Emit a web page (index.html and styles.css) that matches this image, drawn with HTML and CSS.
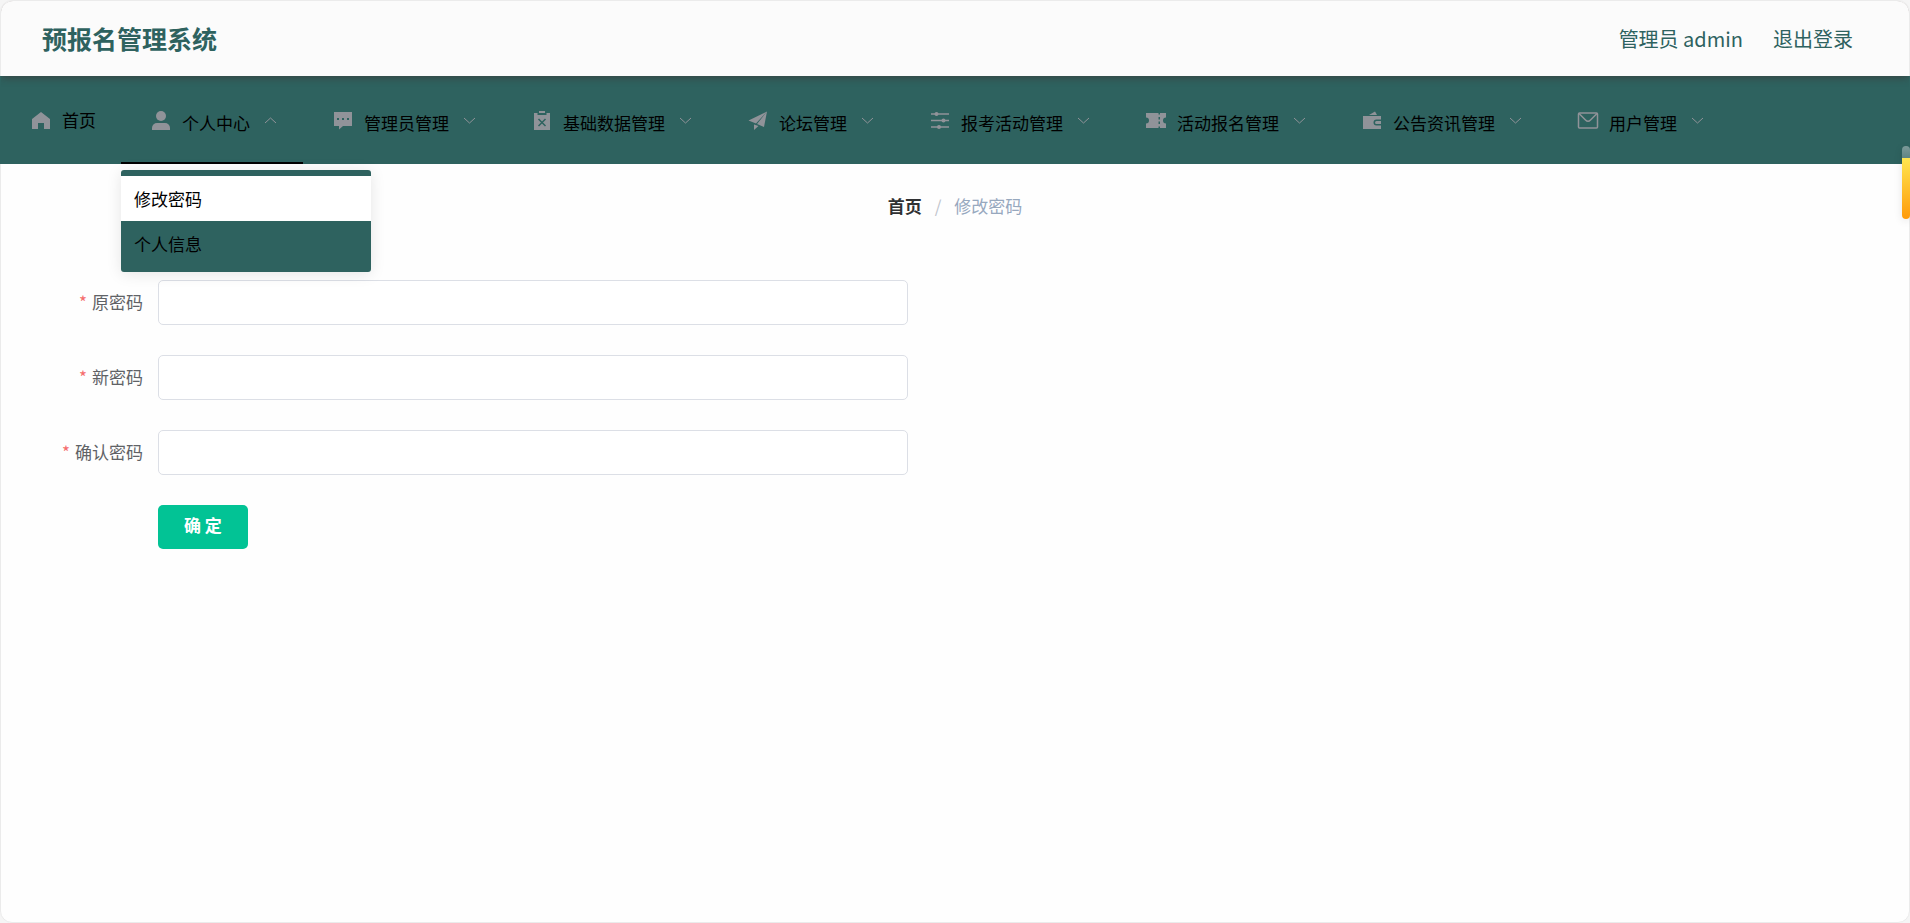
FILE: index.html
```html
<!DOCTYPE html>
<html lang="zh-CN">
<head>
    <meta charset="UTF-8">
    <meta name="viewport" content="width=device-width, initial-scale=1.0">
    <title>预报名管理系统</title>
    <link rel="stylesheet" href="styles.css">
</head>
<body>
    <div class="app">
        <header class="header">
            <h1 class="title">预报名管理系统</h1>
            <div class="user">
                <span>管理员 admin</span>
                <a href="#">退出登录</a>
            </div>
        </header>

        <nav class="navbar">
            <ul class="menu">
                <li class="menu-item">
                    <a class="menu-link" href="#">
                        <svg class="icon" viewBox="0 0 22 22"><path d="M11 2 2 9v10h6v-6h6v6h6V9z"/></svg>
                        <span>首页</span>
                    </a>
                </li>
                <li class="menu-item submenu active">
                    <a class="menu-link" href="#">
                        <svg class="icon" viewBox="0 0 22 22"><circle cx="11" cy="6" r="5"/><path d="M2 20v-2a5 5 0 0 1 5-5h8a5 5 0 0 1 5 5v2z"/></svg>
                        <span class="menu-text">个人中心</span>
                        <svg class="arrow" viewBox="0 0 15 15"><path d="m2 10 5.500-5 5.500 5"/></svg>
                    </a>
                    <ul class="dropdown">
                        <li><a class="dropdown-link current" href="#">修改密码</a></li>
                        <li><a class="dropdown-link" href="#">个人信息</a></li>
                    </ul>
                </li>
                <li class="menu-item submenu">
                    <a class="menu-link" href="#">
                        <svg class="icon" viewBox="0 0 22 22"><path fill-rule="evenodd" d="M2 2h18v14h-9l-4 3.500V16H2zM5 8v2h2V8zm5 0v2h2V8zm5 0v2h2V8z"/></svg>
                        <span class="menu-text">管理员管理</span>
                        <svg class="arrow" viewBox="0 0 15 15"><path d="m2 5 5.500 5 5.500-5"/></svg>
                    </a>
                </li>
                <li class="menu-item submenu">
                    <a class="menu-link" href="#">
                        <svg class="icon" viewBox="0 0 22 22"><path d="M8 1h6v2H8z"/><path d="M3 3h3.500v2h9V3H19v17H3z"/><path class="icon-mark" d="m7.500 9 7 7m0-7-7 7"/></svg>
                        <span class="menu-text">基础数据管理</span>
                        <svg class="arrow" viewBox="0 0 15 15"><path d="m2 5 5.500 5 5.500-5"/></svg>
                    </a>
                </li>
                <li class="menu-item submenu">
                    <a class="menu-link" href="#">
                        <svg class="icon" viewBox="0 0 22 22"><path d="m1.500 10.500 18.500-9-11 12zM20 1.500l-3 15.500-7-3zM7 14.500l4.500 1.500L7 20z"/></svg>
                        <span class="menu-text">论坛管理</span>
                        <svg class="arrow" viewBox="0 0 15 15"><path d="m2 5 5.500 5 5.500-5"/></svg>
                    </a>
                </li>
                <li class="menu-item submenu">
                    <a class="menu-link" href="#">
                        <svg class="icon" viewBox="0 0 22 22"><path d="M2 3.250h18v1.500H2zM2 9.750h18v1.500H2zM2 16.250h18v1.500H2z"/><circle cx="7.500" cy="4" r="2"/><circle cx="14.500" cy="10.500" r="2"/><circle cx="10" cy="17" r="2"/></svg>
                        <span class="menu-text">报考活动管理</span>
                        <svg class="arrow" viewBox="0 0 15 15"><path d="m2 5 5.500 5 5.500-5"/></svg>
                    </a>
                </li>
                <li class="menu-item submenu">
                    <a class="menu-link" href="#">
                        <svg class="icon" viewBox="0 0 22 22"><path fill-rule="evenodd" d="M1 3h12.500v1.500h1.500V3h6v4.500a3 3 0 0 0 0 6V18h-6v-1.500h-1.500V18H1v-4.500a3 3 0 0 0 0-6zm12.500 4v2.500h1.500V7zm0 4.500V14h1.500v-2.500z"/></svg>
                        <span class="menu-text">活动报名管理</span>
                        <svg class="arrow" viewBox="0 0 15 15"><path d="m2 5 5.500 5 5.500-5"/></svg>
                    </a>
                </li>
                <li class="menu-item submenu">
                    <a class="menu-link" href="#">
                        <svg class="icon" viewBox="0 0 22 22"><path d="m8 5 6-3.500 2 3.500z"/><path d="M2 6h18v3.500h-4.500a3 3 0 0 0 0 6H20V19H2z"/><path d="M15.500 11H20v3h-4.500a1.500 1.500 0 0 1 0-3z"/></svg>
                        <span class="menu-text">公告资讯管理</span>
                        <svg class="arrow" viewBox="0 0 15 15"><path d="m2 5 5.500 5 5.500-5"/></svg>
                    </a>
                </li>
                <li class="menu-item submenu">
                    <a class="menu-link" href="#">
                        <svg class="icon icon-line" viewBox="0 0 22 22"><rect x="1.500" y="3" width="19" height="15" rx="1"/><path d="m2 3.500 6.500 6.500q2.500 2.500 5 0L20 3.500"/></svg>
                        <span class="menu-text">用户管理</span>
                        <svg class="arrow" viewBox="0 0 15 15"><path d="m2 5 5.500 5 5.500-5"/></svg>
                    </a>
                </li>
            </ul>
        </nav>

        <main class="main">
            <div class="breadcrumb">
                <a href="#">首页</a>
                <span class="separator">/</span>
                <span>修改密码</span>
            </div>

            <form class="password-form">
                <div class="form-item">
                    <label for="old-password">原密码</label>
                    <input type="password" id="old-password">
                </div>
                <div class="form-item">
                    <label for="new-password">新密码</label>
                    <input type="password" id="new-password">
                </div>
                <div class="form-item">
                    <label for="confirm-password">确认密码</label>
                    <input type="password" id="confirm-password">
                </div>
                <button class="submit-btn" type="submit">确 定</button>
            </form>
        </main>
    </div>
    <div class="side-handle"></div>
</body>
</html>
```
FILE: styles.css
```css
* {
    box-sizing: border-box;
}

body {
    margin: 0;
    background: #f5f5f5;
    color: #303133;
    font-family: "Noto Sans CJK SC", sans-serif;
    font-size: 17px;
    line-height: 24px;
}

a {
    color: inherit;
    text-decoration: none;
}

ul {
    list-style: none;
    margin: 0;
    padding: 0;
}

.app {
    min-height: 100vh;
    background: #fefefe;
    border: 1px solid #ebebeb;
    border-radius: 12px;
}

/* header */
.header {
    position: relative;
    z-index: 1;
    display: flex;
    justify-content: space-between;
    align-items: center;
    height: 75px;
    padding: 0 56px 0 41px;
    background: #fbfbfb;
    border-radius: 12px 12px 0 0;
    box-shadow: 0 1px 8px rgba(64, 40, 40, 0.6);
    clip-path: inset(0 0 -12px 0 round 12px 12px 0 0);
    color: #2e625f;
}

.title {
    margin: 0 0 2px;
    font-size: 25px;
}

.user {
    display: flex;
    gap: 30px;
    font-size: 20px;
}

/* menu */
.navbar {
    margin: 0 -1px;
    padding: 0 1px;
    background: #2e625f;
    color: #000;
}

.menu {
    display: flex;
}

.menu-item {
    position: relative;
}

.menu-link {
    display: flex;
    align-items: center;
    height: 88px;
    padding: 2px 25px 0;
    border-bottom: 2px solid transparent;
    white-space: nowrap;
}

.active .menu-link {
    border-bottom-color: #000;
}

.menu-text {
    padding-top: 5px;
}

.icon {
    width: 22px;
    height: 22px;
    margin: 2px 10px 0 4px;
    fill: #909399;
}

.icon-line {
    fill: none;
    stroke: #909399;
    stroke-width: 1.500;
}

.icon-mark {
    fill: none;
    stroke: #2e625f;
    stroke-width: 1.500;
}

.arrow {
    width: 15px;
    height: 15px;
    margin-left: 13px;
    fill: none;
    stroke: #909399;
}

.dropdown {
    position: absolute;
    top: 94px;
    left: 0;
    z-index: 2;
    width: 250px;
    padding: 6px 0;
    background: #2e625f;
    border-radius: 3px;
    box-shadow: 0 2px 15px rgba(0, 0, 0, 0.1);
}

.dropdown-link {
    display: block;
    padding: 0 13px;
    line-height: 45px;
}

.dropdown-link.current {
    background: #fff;
}

/* content */
.main {
    padding: 30px 25px;
}

.breadcrumb {
    display: flex;
    justify-content: center;
    gap: 13px;
    color: #97a8be;
}

.breadcrumb a {
    color: #303133;
    font-weight: bold;
}

.separator {
    color: #c0c4cc;
}

.password-form {
    display: flex;
    flex-direction: column;
    gap: 30px;
    max-width: 882px;
    margin-top: 62px;
}

.form-item {
    display: flex;
}

.form-item label {
    width: 132px;
    padding-right: 15px;
    color: #606266;
    line-height: 43px;
    text-align: right;
}

.form-item label::before {
    content: "*";
    margin-right: 5px;
    color: #f56c6c;
}

.form-item input {
    flex: 1;
    height: 45px;
    padding: 0 18px;
    background: #fff;
    border: 1px solid #dcdfe6;
    border-radius: 5px;
    font: inherit;
}

.submit-btn {
    align-self: flex-start;
    height: 44px;
    margin-left: 132px;
    padding: 0 26px 5px;
    background: #02c395;
    border: none;
    border-radius: 5px;
    color: #fff;
    font: inherit;
    font-weight: bold;
    cursor: pointer;
}

/* drawer handle on the window edge */
.side-handle {
    position: fixed;
    top: 146px;
    right: 0;
    width: 8px;
    height: 73px;
    background: linear-gradient(#7d9a99, #5f8583 12px, #ffe650 12px, #ff9a0a);
    border-radius: 4px;
    box-shadow: 0 2px 8px rgba(0, 0, 0, 0.1);
}
```
